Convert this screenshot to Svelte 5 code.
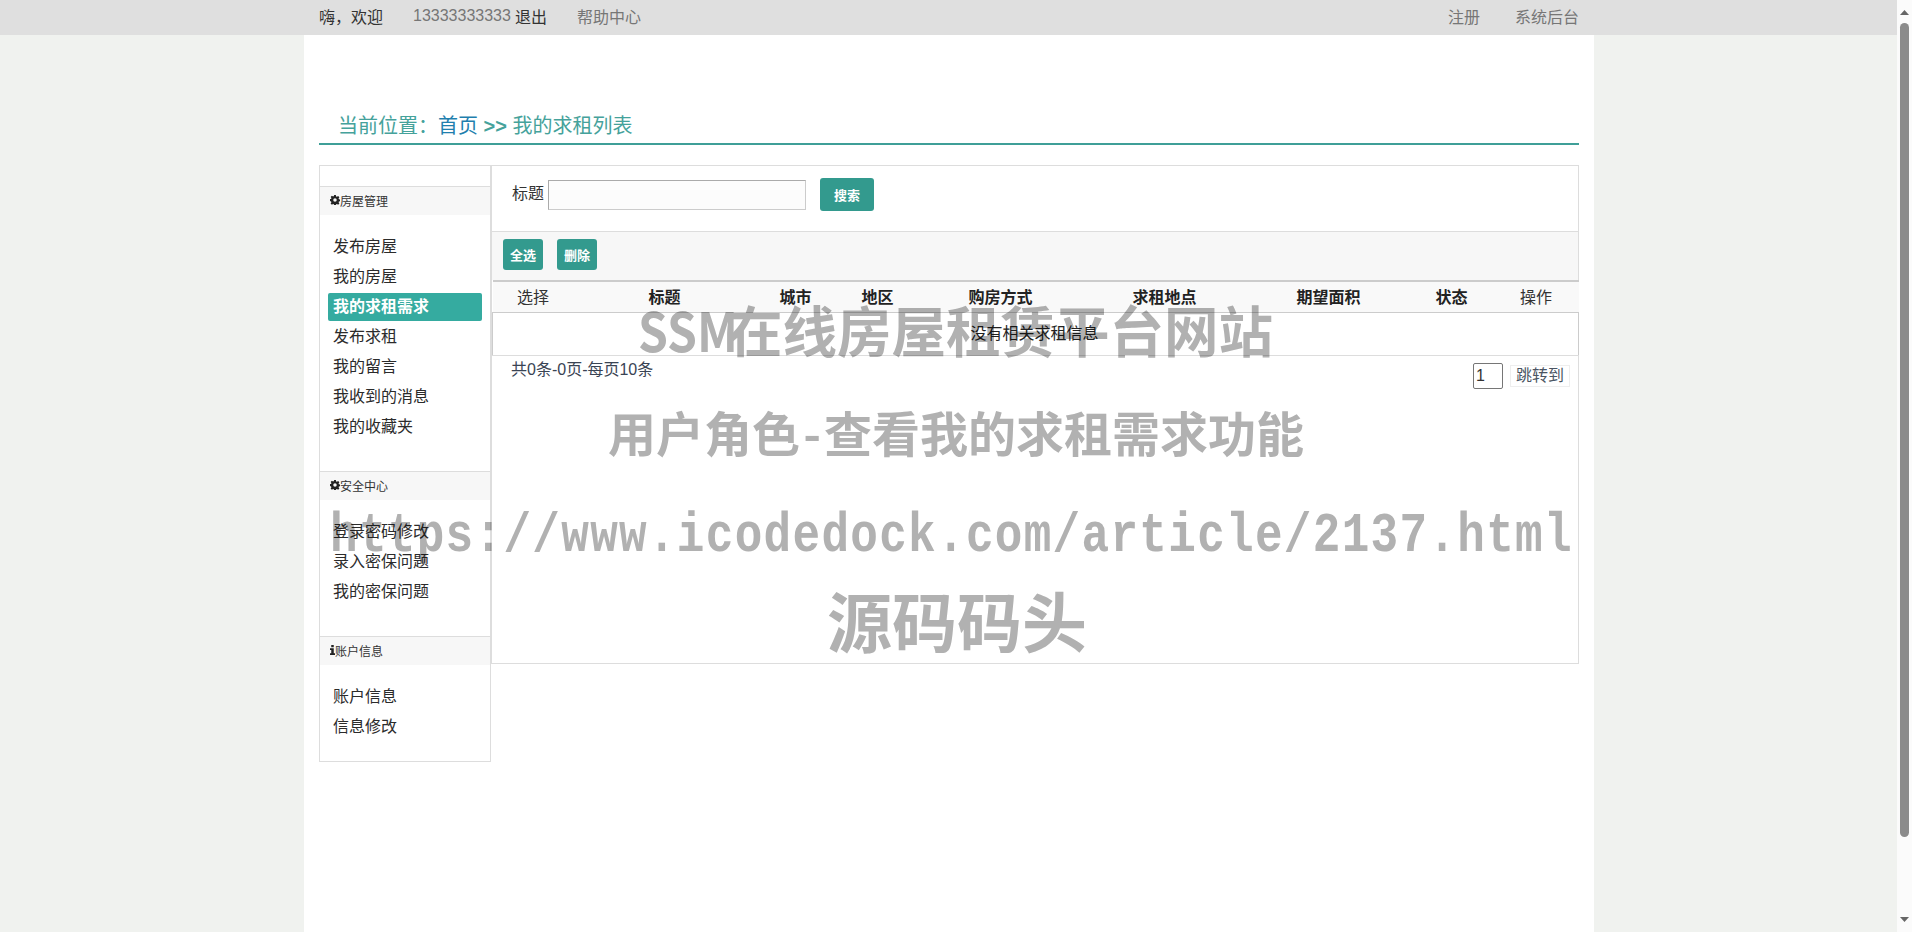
<script>
  const menus = [
    { icon: 'cog', title: '房屋管理', items: ['发布房屋', '我的房屋', '我的求租需求', '发布求租', '我的留言', '我收到的消息', '我的收藏夹'] },
    { icon: 'cog', title: '安全中心', items: ['登录密码修改', '录入密保问题', '我的密保问题'] },
    { icon: 'info', title: '账户信息', items: ['账户信息', '信息修改'] },
  ];

  const columns = [
    { label: '选择', width: 81 },
    { label: '标题', width: 182, bold: true },
    { label: '城市', width: 80, bold: true },
    { label: '地区', width: 84, bold: true },
    { label: '购房方式', width: 162, bold: true },
    { label: '求租地点', width: 166, bold: true },
    { label: '期望面积', width: 162, bold: true },
    { label: '状态', width: 84, bold: true },
    { label: '操作', width: 85 },
  ];
</script>

<div class="topbar">
  <div class="topbar-inner">
    <span class="hello">嗨，欢迎</span>
    <span class="phone">13333333333</span>
    <a class="logout" href="#top">退出</a>
    <a class="help" href="#top">帮助中心</a>
    <span class="spacer"></span>
    <a class="help" href="#top">注册</a>
    <a class="help admin" href="#top">系统后台</a>
  </div>
</div>

<div class="container">
  <div class="crumb">当前位置：<a href="#top">首页</a> <b>&gt;&gt;</b> 我的求租列表</div>

  <div class="panel">
    <aside class="side">
      {#each menus as menu}
        <div class="side-head">
          {#if menu.icon === 'cog'}
            <svg viewBox="0 0 16 16" width="10" height="10" aria-hidden="true">
              <path fill-rule="evenodd" d="M6.6 0h2.8l.4 2.2 1.3.6 1.9-1.3 2 2-1.3 1.9.6 1.3 2.2.4v2.8l-2.2.4-.6 1.3 1.3 1.9-2 2-1.9-1.3-1.3.6-.4 2.2H6.6l-.4-2.2-1.3-.6-1.9 1.3-2-2 1.3-1.9-.6-1.3L-.5 9.4V6.6l2.2-.4.6-1.3L1 3l2-2 1.9 1.3 1.3-.6zM8 5.2a2.8 2.8 0 1 0 0 5.6 2.8 2.8 0 0 0 0-5.6z"/>
            </svg>
          {:else}
            <svg viewBox="0 0 8 16" width="5" height="10" aria-hidden="true">
              <path d="M2 0h4v3.4H2zM0 5.2h6v8h2V16H0v-2.8h2V8H0z"/>
            </svg>
          {/if}
          <span>{menu.title}</span>
        </div>
        <ul class="side-list">
          {#each menu.items as item}
            <li class:active={item === '我的求租需求'}>{item}</li>
          {/each}
        </ul>
      {/each}
    </aside>

    <main class="content">
      <div class="search">
        <label for="title">标题</label>
        <input id="title" type="text" />
        <button class="btn search-btn">搜索</button>
      </div>
      <div class="toolbar">
        <button class="btn tool-btn">全选</button>
        <button class="btn tool-btn">删除</button>
      </div>
      <table>
        <thead>
          <tr>
            {#each columns as col}
              <th class:bold={col.bold} style="width:{col.width}px">{col.label}</th>
            {/each}
          </tr>
        </thead>
        <tbody>
          <tr><td colspan="9">没有相关求租信息</td></tr>
        </tbody>
      </table>
      <div class="pager">
        <span class="count">共0条-0页-每页10条</span>
        <div class="jump">
          <input type="text" value="1" />
          <span class="jump-btn">跳转到</span>
        </div>
      </div>
    </main>
  </div>
</div>

<div class="watermark" aria-hidden="true">
  <div class="wm wm1"><span class="latin">SSM</span>在线房屋租赁平台网站</div>
  <div class="wm wm2">用户角色<span class="dash">-</span>查看我的求租需求功能</div>
  <div class="wm wm3">https://www.icodedock.com/article/2137.html</div>
  <div class="wm wm4">源码码头</div>
</div>

<div class="scrollbar" aria-hidden="true">
  <svg class="arrow" viewBox="0 0 15 17" width="15" height="17"><path d="M3 15 7.5 10l4.500 5z" /></svg>
  <div class="thumb"></div>
  <svg class="arrow" viewBox="0 0 15 17" width="15" height="17"><path d="M3 2l4.500 5L12 2z" /></svg>
</div>

<style>
  :global(body) {
    background: #f0f2ef;
    font-family: "Liberation Sans", "Noto Sans CJK SC", sans-serif;
    color: #222;
    overflow: hidden;
  }

  a { text-decoration: none; color: inherit; }

  .topbar {
    height: 35px;
    background: #dfdfdf;
    margin-right: 15px;
  }

  .topbar-inner {
    width: 1260px;
    margin-left: 319px;
    height: 35px;
    box-sizing: border-box;
    padding-bottom: 4px;
    display: flex;
    align-items: center;
    font-size: 16px;
    color: #767676;
  }

  .hello { color: #333; width: 94px; }
  .logout { color: #333; margin-left: 4px; }
  .help { margin-left: 30px; }
  .spacer { flex: 1; }
  .admin { margin-left: 35px; }

  .container {
    width: 1260px;
    height: 897px;
    margin-left: 304px;
    padding: 0 15px;
    background: #fff;
  }

  .crumb {
    height: 110px;
    box-sizing: border-box;
    padding: 73px 0 0 19px;
    border-bottom: 2px solid #3f9f98;
    font-size: 20px;
    line-height: 36px;
    color: #45a29b;
  }
  .crumb a { color: #1f7fae; }

  .panel {
    display: flex;
    align-items: flex-start;
    margin-top: 20px;
  }

  .side {
    width: 172px;
    height: 597px;
    box-sizing: border-box;
    border: 1px solid #ddd;
    padding-top: 20px;
    flex: none;
  }

  .side-head {
    height: 29px;
    box-sizing: border-box;
    display: flex;
    align-items: center;
    padding: 0 0 2px 10px;
    background: #f7f7f7;
    border-top: 1px solid #ddd;
    font-size: 12px;
    color: #333;
  }
  .side-head svg { fill: #222; }

  .side-list {
    list-style: none;
    margin: 0;
    padding: 18px 8px 28px;
  }

  .side-list li {
    height: 28px;
    line-height: 28px;
    margin-bottom: 2px;
    padding-left: 5px;
    font-size: 16px;
    color: #2b2b2b;
    border-radius: 2px;
  }
  .side-list li.active {
    background: #35aba0;
    color: #fff;
    font-weight: 700;
  }

  .content {
    width: 1088px;
    min-width: 0;
    height: 499px;
    box-sizing: border-box;
    border: 1px solid #ddd;
  }

  .search {
    height: 65px;
    box-sizing: border-box;
    display: flex;
    align-items: center;
    padding: 0 0 7px 20px;
    font-size: 16px;
    color: #333;
  }
  .search label { width: 36px; margin-bottom: 6px; }
  .search input {
    width: 258px;
    height: 30px;
    box-sizing: border-box;
    background: #fcfcfc;
    border: 1px solid #ccc;
    border-top-color: #aaa;
    border-left-color: #aaa;
  }

  .btn {
    border: 0;
    border-radius: 3px;
    background: #339a8e;
    color: #fff;
    font: 700 13px "Liberation Sans", "Noto Sans CJK SC", sans-serif;
    padding: 0;
  }
  .search-btn { width: 54px; height: 33px; margin: 0 0 2px 14px; }

  .toolbar {
    height: 49px;
    box-sizing: border-box;
    display: flex;
    gap: 14px;
    align-items: center;
    padding: 0 0 4px 11px;
    background: #f7f7f7;
    border-top: 1px solid #ddd;
  }
  .tool-btn { width: 40px; height: 31px; }

  table {
    width: 100%;
    border-collapse: collapse;
    table-layout: fixed;
  }
  th {
    height: 27px;
    padding: 0 0 3px;
    font-size: 16px;
    font-weight: 400;
    background: #f9f9f9;
    color: #333;
    border-top: 2px solid #ccc;
    border-bottom: 1px solid #ccc;
  }
  th.bold { font-weight: 700; color: #222; }
  td {
    height: 37px;
    padding: 0 2px 5px 0;
    text-align: center;
    font-size: 16px;
    color: #222;
    border-bottom: 1px solid #ddd;
    border-left: 1px solid #ccc;
    border-right: 1px solid #ccc;
  }

  .pager {
    display: flex;
    justify-content: space-between;
    padding: 3px 8px 0 19px;
    font-size: 16px;
    color: #3a4454;
  }
  .count { line-height: 22px; }

  .jump { display: flex; align-items: center; gap: 7px; margin-top: 4px; }
  .jump input {
    width: 30px;
    height: 26px;
    box-sizing: border-box;
    padding: 0 2px;
    border: 1px solid #767676;
    border-radius: 2px;
    font: 16px "Liberation Sans", sans-serif;
    color: #333;
  }
  .jump-btn {
    width: 60px;
    height: 22px;
    line-height: 20px;
    box-sizing: border-box;
    text-align: center;
    border: 1px solid #eee;
    color: #4b5563;
  }

  .watermark {
    position: fixed;
    inset: 0;
    pointer-events: none;
    mix-blend-mode: multiply;
    color: #b1b1b1;
    font-family: "Noto Sans CJK SC", sans-serif;
    font-weight: 700;
  }
  .wm { position: absolute; white-space: nowrap; transform-origin: 0 0; line-height: 1; }
  .wm1 { left: 638px; top: 302px; font-size: 54.5px; display: flex; }
  .wm1 .latin { display: block; width: 90px; transform: scaleX(0.88); transform-origin: 0 0; }
  .wm2 { left: 608px; top: 407px; font-size: 48px; }
  .wm2 .dash { display: inline-block; width: 24px; text-align: center; }
  .wm3 {
    left: 330px;
    top: 509px;
    font-family: "Liberation Mono", monospace;
    font-size: 46px;
    letter-spacing: 1.3px;
    transform: scaleY(1.2);
  }
  .wm4 { left: 827px; top: 587px; font-size: 65px; }

  .scrollbar {
    position: fixed;
    top: 0;
    right: 0;
    bottom: 0;
    width: 15px;
    background: #fbfbfb;
    display: flex;
    flex-direction: column;
  }
  .arrow { fill: #666; flex: none; }
  .thumb {
    height: 814px;
    margin: 6px 3px 0;
    border-radius: 5px;
    background: #8b8b8b;
  }
  .thumb + .arrow { margin-top: auto; }
</style>
